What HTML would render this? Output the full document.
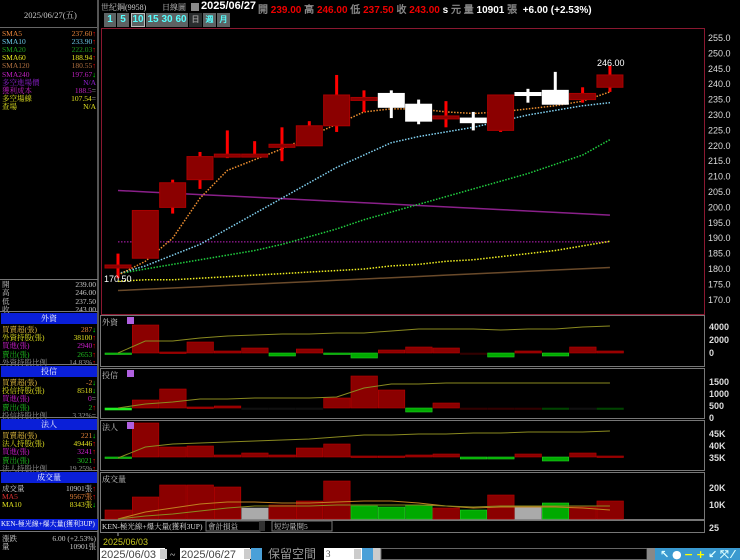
<!DOCTYPE html>
<html><head><meta charset="utf-8"><style>
*{margin:0;padding:0;box-sizing:border-box}
body{width:740px;height:560px;background:#000;overflow:hidden;position:relative;font-family:"Liberation Serif","Noto Serif CJK SC",serif;font-size:9px;color:#ccc}
.a{position:absolute;white-space:nowrap}
.row{position:absolute;left:2px;width:94px;height:9px;line-height:9px;font-size:7.5px}
.row .v{position:absolute;right:0}
.hd{position:absolute;left:1px;width:96px;height:11px;background:#0a1fd8;color:#fff;text-align:center;line-height:11px;font-size:8px}
.btn{position:absolute;top:13px;height:14px;width:13px;background:#5d6263;color:#5ff;font:bold 10px "Liberation Sans",sans-serif;text-align:center;line-height:14px}
</style></head><body>
<div class="a" style="left:24px;top:9px;color:#ccc;font-size:8.5px">2025/06/27(五)</div>
<div class="a" style="left:0;top:27px;width:98px;height:1px;background:#666"></div>
<div class="a" style="left:97px;top:0;width:2px;height:560px;background:#555"></div>
<div id="left"></div>
<div class="a" style="left:101px;top:2px;color:#ccc;font-size:8px">世紀鋼(9958)</div>
<div class="a" style="left:162px;top:2px;color:#ccc;font-size:8px">日線圖</div>
<div class="a" style="left:191px;top:3px;width:8px;height:8px;background:#888"></div>
<div class="a" style="left:201px;top:0px;font:bold 11px 'Liberation Sans',sans-serif;color:#fff">2025/06/27</div>
<div class="a" style="left:258px;top:1px;font:bold 10px 'Liberation Sans',sans-serif;color:#888">開 <span style="color:#e00">239.00</span> 高 <span style="color:#e00">246.00</span> 低 <span style="color:#e00">237.50</span> 收 <span style="color:#e00">243.00</span> <span style="color:#fff">s</span> 元 量 <span style="color:#fff">10901</span> 張 &nbsp;<span style="color:#fff">+6.00 (+2.53%)</span></div>
<div id="btns"></div>
<svg id="s" class="a" style="left:0;top:0" width="740" height="560"></svg>
<script>
const L=document.getElementById('left');
function row(y,n,v,c,vc,ar){L.insertAdjacentHTML('beforeend',`<div class="row" style="top:${y}px;color:${c}">${n}<span class="v" style="color:${vc||c}">${v}${ar?`<span style="color:${ar=='u'?'#f00':ar=='d'?'#0f0':'#ccc'}">${ar=='u'?'↑':ar=='d'?'↓':'='}</span>`:''}</span></div>`)}
let r=[["SMA5","237.60","#e8853a","u"],["SMA10","233.90","#6cc8e8","u"],["SMA20","222.03","#1c9c1c","u"],["SMA60","188.94","#e8e820","u"],["SMA120","180.55","#b07040","u"],["SMA240","197.67","#c020c0","d"],["多空進場價","N/A","#9020d0"],["獲利成本","188.5","#c020c0","e"],["多空場線","107.54","#e0e020","e"],["查場","N/A","#e0e020"]];
r.forEach((e,i)=>row(29+i*8.1,e[0],e[1],e[2],e[2],e[3]));
[["開","239.00"],["高","246.00"],["低","237.50"],["收","243.00"]].forEach((e,i)=>row(280+i*8.3,e[0],e[1],'#ccc'));
L.insertAdjacentHTML('beforeend','<div class="a" style="left:0;top:279px;width:98px;height:1px;background:#777"></div>');
function sec(y,t,rows){L.insertAdjacentHTML('beforeend',`<div class="a" style="left:0;top:${y-2}px;width:98px;height:1px;background:#777"></div><div class="hd" style="top:${y}px">${t}</div>`);rows.forEach((e,i)=>row(y+12+i*8.2,e[0],e[1],e[2],e[3],e[4]));}
sec(313,"外資",[["買賣超(張)","287","#e8c040","#e8853a","d"],["外資持股(張)","38100","#e0e020","#e0e020","u"],["買進(張)","2940","#d020d0","#d020d0","u"],["賣出(張)","2653","#20c020","#20c020","u"],["外資持股比例","14.83%","#999","#999","u"]]);
sec(366,"投信",[["買賣超(張)","-2","#e8c040","#e8853a","d"],["投信持股(張)","8518","#e0e020","#e0e020","d"],["買進(張)","0","#d020d0","#d020d0","e"],["賣出(張)","2","#20c020","#20c020","u"],["投信持股比例","3.32%","#999","#999","e"]]);
sec(419,"法人",[["買賣超(張)","221","#e8c040","#e8853a","d"],["法人持股(張)","49446","#e0e020","#e0e020","u"],["買進(張)","3241","#d020d0","#d020d0","u"],["賣出(張)","3021","#20c020","#20c020","u"],["法人持股比例","19.25%","#999","#999","u"]]);
sec(472,"成交量",[["成交量","10901張","#ccc","#ccc","u"],["MA5","9567張","#e03030","#e8853a","u"],["MA10","8343張","#e0e020","#e0e020","d"]]);
L.insertAdjacentHTML('beforeend','<div class="a" style="left:0;top:519px;width:98px;height:11px;background:#0a1fd8;color:#fff;font-size:7px;line-height:11px;padding-left:1px;overflow:hidden">KEN-極光線+爆大量(獲利3UP)</div><div class="a" style="left:0;top:531px;width:98px;height:1px;background:#777"></div>');
row(534,"漲跌","6.00 (+2.53%)","#ccc");row(542,"量","10901張","#ccc");
const B=document.getElementById('btns');
[["1",104],["5",117],["10",131],["15",146],["30",160],["60",174]].forEach(b=>B.insertAdjacentHTML('beforeend',`<div class="btn" style="left:${b[1]}px;width:${b[0].length>1?14:12}px">${b[0]}</div>`));
B.insertAdjacentHTML('beforeend',`<div class="btn" style="left:189px;background:#2a2d2e;color:#999;font-size:8px">日</div><div class="btn" style="left:203px;color:#5ff;font-size:8px">週</div><div class="btn" style="left:217px;color:#5ff;font-size:8px">月</div>`);
B.insertAdjacentHTML('beforeend','<div class="a" style="left:131px;top:13px;width:14px;height:14px;border:1px solid #bbb"></div>');
const S=document.getElementById('s');let h='';
const Y=p=>38+(255-p)*3.08, X=i=>118+i*27.33;
h+=`<rect x="101.5" y="28.5" width="603" height="286" fill="none" stroke="#8a1830"/>`;
[[315,366],[368,418],[420,470],[472,519]].forEach(f=>h+=`<rect x="100.5" y="${f[0]+.5}" width="604" height="${f[1]-f[0]}" fill="none" stroke="#777"/>`);
h+=`<rect x="100.5" y="520.5" width="604" height="12" fill="none" stroke="#777"/>`;
for(let p=255;p>=170;p-=5)h+=`<text x="708" y="${Y(p)+3}" fill="#ddd" font-size="9" font-family="Liberation Sans">${p.toFixed(1)}</text>`;
[["4000",327],["2000",340],["0",353],["1500",382],["1000",394],["500",406],["0",418],["45K",434],["40K",446],["35K",458],["20K",488],["10K",505],["25",528]].forEach(a=>h+=`<text x="709" y="${a[1]+3}" fill="#ddd" font-size="9" font-weight="bold" font-family="Liberation Sans">${a[0]}</text>`);
function pl(arr,col,dash){h+=`<polyline points="${arr.map((p,i)=>X(i)+','+Y(p)).join(' ')}" fill="none" stroke="${col}" stroke-width="1.5" ${dash?'stroke-dasharray="1.5 1.5"':''}/>`}
const lin=(a,b)=>Array.from({length:19},(_,i)=>a+(b-a)*i/18);
pl(lin(205.5,197.5),'#8a208a',0);pl(lin(173,180.5),'#6a4a2a',0);
h+=`<line x1="118" x2="610" y1="${Y(188.8)}" y2="${Y(188.8)}" stroke="#c020c0" stroke-dasharray="1.5 1.5"/>`;
pl([176,176.5,176.5,177,177.5,178,178.5,179,179.5,180,181,181.5,182.5,183,184,185,186,187.5,189],'#f0f020',1);
pl([178.5,180,181.5,183,184.5,186,188,190.5,193,196,198.5,201,203.5,206,208.5,211,214,217,222],'#20d040',1);
pl([178.5,181,184.5,188,193,198,203,208,213,217,221,223,224.5,226,228,230,231.5,233,234],'#80d0f0',1);
pl([178,182.5,190,203,212,215.5,219,223,227,231,232,232,231,230.5,231,232,233,234.5,237.5],'#f09030',1);
const C=[[181,181.3,185,177],[183.5,199,199,183.5],[200,208,209,198],[209,216.5,218,206],[217,217.3,225,216],[217,217.3,221.5,216.5],[219.5,220.5,226,215],[220,226.5,228,220],[226.5,236.5,243,224.5],[235.3,235.7,238,231],[237,232.5,238,229],[233.5,228,235,227],[229.3,229.7,234.5,226],[229,227.5,231,225],[225,236.5,236.5,224.5],[237.3,236.8,238.5,234],[238,233.5,244,234],[235,237,239,234],[239,243,246,237.5]];
C.forEach((c,i)=>{const x=X(i),[o,cl,hi,lo]=c,up=cl>=o,top=Math.max(o,cl),bot=Math.min(o,cl);const col=up?'#f00':'#fff';
h+=`<line x1="${x}" x2="${x}" y1="${Y(hi)}" y2="${Y(lo)}" stroke="${col}" stroke-width="3"/>`;
let bh=Math.max(3,Y(bot)-Y(top));h+=`<rect x="${x-13}" y="${Y(top)}" width="26" height="${bh}" fill="${up?'#8b0000':'#fff'}" stroke="${up?'#a00':'#fff'}"/>`;});
h+=`<text x="597" y="66" fill="#fff" font-size="9" font-family="Liberation Sans">246.00</text><text x="104" y="282" fill="#fff" font-size="9" font-family="Liberation Sans">170.50</text>`;
function bars(base,tops,cols){tops.forEach((t,i)=>{const y=Math.min(t,base),hh=Math.max(1.5,Math.abs(t-base));const c=cols[i]||(t<base?'#8b0000':'#0a0');h+=`<rect x="${X(i)-13}" y="${y}" width="26.5" height="${hh}" fill="${c}" stroke="${c=='#8b0000'?'#b00':c=='#0a0'?'#2c2':c}" stroke-width=".6"/>`})}
bars(353,[354,325,352,342,351,348,356,349,354,358,350,347,348,353,357,351,356,347,351],{0:'#0a0',6:'#0a0',8:'#0a0',9:'#0a0',14:'#0a0',16:'#0a0',13:'#300'});
bars(408,[410,400,389,407,406,408,408,408,398,376,390,412,403,408,408,408,408,408,408],{0:'#2e2',11:'#0a0',5:'#111',6:'#111',7:'#111',13:'#300',14:'#300',15:'#300',16:'#040',17:'#111',18:'#040'});
bars(457,[457,423,447,446,455,453,455,448,444,456,456,455,454,459,459,454,461,453,456],{13:'#0a0',14:'#0a0',16:'#0a0'});
bars(519,[510,497,485,485,487,508,505,501,481,506,507,505,508,510,495,506,503,507,501],{5:'#aaa',9:'#0a0',10:'#0a0',11:'#0a0',13:'#0a0',15:'#aaa',16:'#0a0'});
function sl(arr,col){h+=`<polyline points="${arr.map((y,i)=>X(i)+','+y).join(' ')}" fill="none" stroke="${col}" stroke-width="1"/>`}
sl([353,341,341,338,336,335,334,334,333,333,331,329,329,329,330,329,329,327,326],'#8a8a20');
sl([408,404,402,399,399,398,398,398,397,388,384,384,383,383,383,383,383,383,383],'#8a8a20');
sl([458,447,444,443,442,441,440,439,437,435,435,434,434,433,433,432,432,432,431],'#8a8a20');
sl([519,512,508,504,502,502,503,503,502,501,501,503,506,508,507,507,507,508,510],'#c08020');
sl([519,516,514,511,508,506,506,506,505,505,505,505,506,507,506,506,506,506,506],'#8a8a20');
h+=`<rect x="127" y="317" width="7" height="7" fill="#b060e0"/><rect x="127" y="370" width="7" height="7" fill="#b060e0"/><rect x="127" y="422" width="7" height="7" fill="#b060e0"/>`;
[["外資",317],["投信",370],["法人",422],["成交量",474]].forEach(t=>h+=`<text x="102" y="${t[1]+8}" fill="#ccc" font-size="8">${t[0]}</text>`);
h+=`<text x="102" y="529" fill="#ddd" font-size="7.5">KEN-極光線+爆大量(獲利3UP)</text><rect x="206" y="521" width="54" height="10" fill="none" stroke="#777"/><text x="208" y="529" fill="#ccc" font-size="7.5">會計損益</text><rect x="259" y="521" width="6" height="10" fill="#333"/><rect x="272" y="521" width="60" height="10" fill="none" stroke="#777"/><text x="274" y="529" fill="#ccc" font-size="7.5">短均量開5</text>`;
h+=`<line x1="118" x2="118" y1="533" y2="536" stroke="#aaa"/><text x="103" y="545" fill="#c8c820" font-size="9" font-family="Liberation Sans">2025/06/03</text>`;
h+=`<rect x="100" y="548" width="65" height="12" fill="#fff"/><text x="101" y="558" fill="#444" font-size="11" font-family="Liberation Sans">2025/06/03</text><rect x="160" y="549" width="7" height="10" fill="#ccc"/>`;
h+=`<text x="170" y="558" fill="#ccc" font-size="10">~</text><rect x="180" y="548" width="70" height="12" fill="#fff"/><text x="181" y="558" fill="#444" font-size="11" font-family="Liberation Sans">2025/06/27</text><rect x="244" y="549" width="7" height="10" fill="#ccc"/><rect x="251" y="548" width="11" height="12" fill="#4aa0d8"/>`;
h+=`<text x="268" y="558" fill="#999" font-size="12" font-family="Noto Sans CJK SC">保留空間</text><rect x="324" y="548" width="38" height="12" fill="#fff"/><text x="326" y="557" fill="#444" font-size="9">3</text><rect x="354" y="549" width="7" height="10" fill="#ccc"/><rect x="362" y="548" width="11" height="12" fill="#4aa0d8"/><rect x="373" y="548" width="8" height="12" fill="#ccc"/>`;
h+=`<rect x="381" y="548.5" width="266" height="11" fill="#000" stroke="#666"/><rect x="647" y="548" width="8" height="12" fill="#888"/><rect x="655" y="548" width="85" height="12" fill="#3a9ad0"/>`;
["↖","●","−","+","↙","⤧","⁄"].forEach((g,i)=>h+=`<text x="${660+i*12}" y="558" fill="${i==1?'#fff':i==2||i==3?'#ff0':'#dff'}" font-size="11" font-weight="bold" font-family="DejaVu Sans">${g}</text>`);
S.innerHTML=h;
</script>
</body></html>
